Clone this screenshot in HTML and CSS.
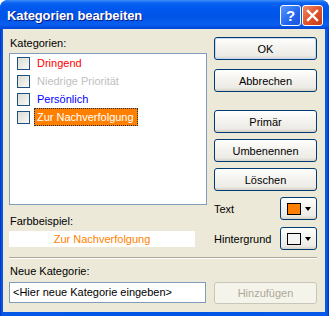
FILE: index.html
```html
<!DOCTYPE html>
<html lang="de">
  <head>
    <meta charset="UTF-8">
    <title>Kategorien bearbeiten</title>
    <link rel="stylesheet" href="styles.css">
  </head>
  <body>
    <div class="window">
      <div class="titlebar">
        <span class="title">Kategorien bearbeiten</span>
        <div class="title-buttons">
          <div class="tbtn help">?</div>
          <div class="tbtn close">
            <svg width="13" height="13" viewBox="0 0 13 13">
              <path d="M2 2 L11 11 M11 2 L2 11" stroke="#fff" stroke-width="2.4" stroke-linecap="square"/>
            </svg>
          </div>
        </div>
      </div>

      <div class="client">
        <div class="top">
          <div class="left-col">
            <div class="label">Kategorien:</div>
            <div class="list">
              <div class="row"><span class="check"></span><span class="item red">Dringend</span></div>
              <div class="row"><span class="check"></span><span class="item grey">Niedrige Priorität</span></div>
              <div class="row"><span class="check"></span><span class="item blue">Persönlich</span></div>
              <div class="row"><span class="check"></span><span class="item selected">Zur Nachverfolgung</span></div>
            </div>
            <div class="label sample-label">Farbbeispiel:</div>
            <div class="sample">Zur Nachverfolgung</div>
          </div>

          <div class="right-col">
            <button class="btn default">OK</button>
            <button class="btn gap-small">Abbrechen</button>
            <button class="btn gap-big">Primär</button>
            <button class="btn">Umbenennen</button>
            <button class="btn">Löschen</button>
            <div class="color-row">
              <span>Text</span>
              <button class="color-btn"><span class="swatch orange"></span><span class="arrow"></span></button>
            </div>
            <div class="color-row">
              <span>Hintergrund</span>
              <button class="color-btn"><span class="swatch white"></span><span class="arrow"></span></button>
            </div>
          </div>
        </div>

        <div class="separator"></div>

        <div class="label new-label">Neue Kategorie:</div>
        <div class="bottom">
          <div class="input">&lt;Hier neue Kategorie eingeben&gt;</div>
          <button class="btn disabled">Hinzufügen</button>
        </div>
      </div>
    </div>
  </body>
</html>
```

FILE: styles.css
```css
html, body {
  margin: 0;
  padding: 0;
  background: #ffffff;
  font-family: "Liberation Sans", Arial, sans-serif;
  font-size: 11px;
  color: #000000;
}

.window {
  width: 329px;
  height: 316px;
  background: linear-gradient(to right, #0030c0 0, #0858e8 2px, #0055e5 50%, #0858e8 calc(100% - 2px), #0030c0 100%);
  border-radius: 8px 8px 0 0;
  overflow: hidden;
  display: flex;
  flex-direction: column;
}

.titlebar {
  height: 29px;
  display: flex;
  align-items: center;
  justify-content: space-between;
  padding: 1px 6px 0 7px;
  box-sizing: border-box;
  background: linear-gradient(to bottom, #3d8ef9 0, #0a62f0 3px, #0058ee 8px, #0054e6 60%, #0a5ef0 85%, #0046d5 100%);
}

.title {
  color: #ffffff;
  font-weight: bold;
  font-size: 13px;
  letter-spacing: -0.1px;
  text-shadow: 1px 1px #0a1883;
}

.title-buttons {
  display: flex;
  gap: 1px;
}

.tbtn {
  width: 21px;
  height: 21px;
  box-sizing: border-box;
  border: 1px solid #ffffff;
  border-radius: 3px;
  display: flex;
  align-items: center;
  justify-content: center;
}

.help {
  background: linear-gradient(135deg, #5a96ff, #2266ee 60%, #1a55d8);
  color: #ffffff;
  font-weight: bold;
  font-size: 15px;
}

.close {
  background: linear-gradient(135deg, #f08c6a, #e0542a 50%, #c83c14);
}

.client {
  flex: 1;
  margin: 0 4px 4px 3px;
  background: #ece9d8;
  padding: 0 8px 0 6px;
}

.label {
  height: 14px;
  line-height: 14px;
  padding-left: 1px;
}

.top {
  display: flex;
  gap: 7px;
  height: 228px;
}

.left-col {
  width: 198px;
  padding-top: 7px;
}

.list {
  margin-top: 3px;
  height: 152px;
  box-sizing: border-box;
  border: 1px solid #7f9db9;
  background: #ffffff;
}

.row {
  height: 18px;
  display: flex;
  align-items: center;
  padding-left: 7px;
}

.check {
  width: 13px;
  height: 13px;
  box-sizing: border-box;
  border: 1px solid #1c5180;
  background: linear-gradient(135deg, #dcdcd5, #f8f8f6);
  margin-right: 4px;
}

.item {
  padding: 0 3px 0 2px;
  line-height: 16px;
  border: 1px solid transparent;
}

.red { color: #ff0000; }
.grey { color: #c0c0c0; }
.blue { color: #0000ff; }

.selected {
  background: #ff8000;
  color: #ffffff;
  border: 1px dotted #1a2a50;
}

.sample-label {
  margin-top: 9px;
}

.sample {
  margin-top: 3px;
  width: 186px;
  height: 16px;
  line-height: 16px;
  background: #ffffff;
  color: #ff8000;
  text-align: center;
}

.right-col {
  width: 103px;
  padding-top: 8px;
  display: flex;
  flex-direction: column;
  gap: 6px;
}

.btn {
  width: 103px;
  height: 23px;
  padding: 0;
  font-family: inherit;
  font-size: 11px;
  color: #000000;
  border: 1px solid #003c74;
  border-radius: 3px;
  background: linear-gradient(to bottom, #ffffff 0, #f5f4f0 40%, #ecebe6 85%, #d6d0c5 100%);
}

.default {
  box-shadow: inset 0 0 0 1px #c6d8f8;
}

.gap-small { margin-top: 3px; }
.gap-big { margin-top: 12px; }

.color-row {
  display: flex;
  align-items: center;
  justify-content: space-between;
  height: 23px;
}

.color-row + .color-row {
  margin-top: 1px;
}

.color-btn {
  width: 37px;
  height: 23px;
  padding: 0 0 0 6px;
  border: 1px solid #003c74;
  border-radius: 3px;
  background: linear-gradient(to bottom, #ffffff 0, #f5f4f0 40%, #ecebe6 85%, #d6d0c5 100%);
  display: flex;
  align-items: center;
  gap: 4px;
}

.swatch {
  width: 14px;
  height: 12px;
  box-sizing: border-box;
  border: 1px solid #000000;
}

.orange { background: #ff8000; }
.white { background: #f4f4f4; }

.arrow {
  width: 0;
  height: 0;
  border-left: 3px solid transparent;
  border-right: 3px solid transparent;
  border-top: 4px solid #000000;
}

.separator {
  height: 0;
  border-top: 1px solid #aca899;
  border-bottom: 1px solid #ffffff;
}

.new-label {
  margin-top: 5px;
}

.bottom {
  display: flex;
  gap: 8px;
  margin-top: 4px;
}

.input {
  width: 197px;
  height: 21px;
  box-sizing: border-box;
  border: 1px solid #7f9db9;
  background: #ffffff;
  line-height: 19px;
  padding-left: 3px;
}

.disabled {
  height: 22px;
  color: #aca899;
  border-color: #c9c7ba;
  background: #f5f4ea;
}
```
